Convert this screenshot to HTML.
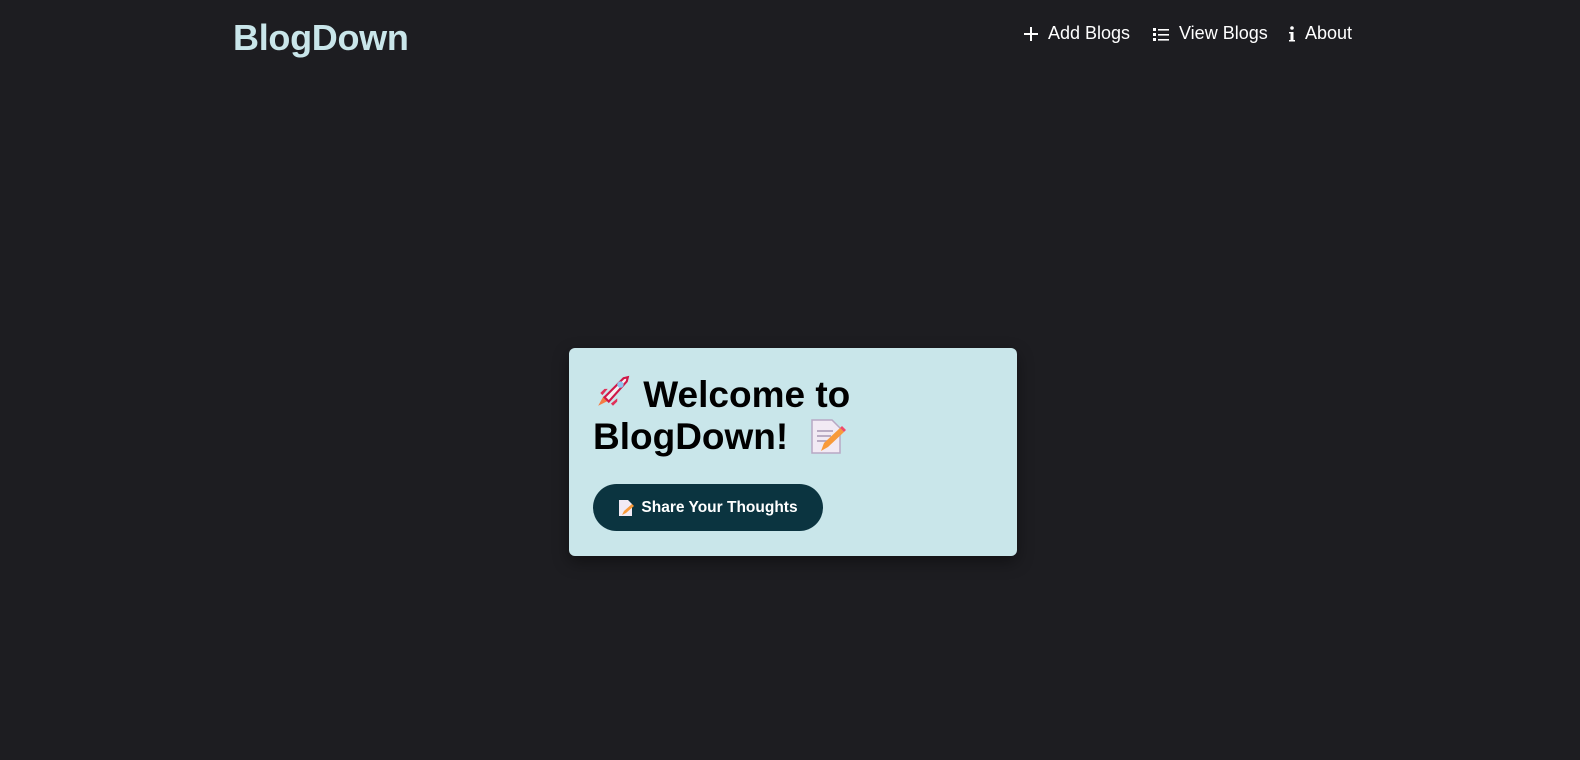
<!DOCTYPE html>
<html><head><meta charset="utf-8"><style>
body{margin:0;width:1580px;height:760px;background:#1d1d21;font-family:"Liberation Sans","DejaVu Sans",sans-serif;position:relative;overflow:hidden}
.logo{position:absolute;left:233px;top:17px;font-size:36px;font-weight:bold;color:#c9e6ea;letter-spacing:-0.3px}
.nav{position:absolute;top:23px;font-size:18px;color:#fff;display:flex;align-items:center;gap:9px}
.card{position:absolute;left:569px;top:348px;width:448px;height:208px;background:#c9e6ea;border-radius:6px;box-shadow:0 6px 16px rgba(0,0,0,.4)}
h1{position:absolute;left:24px;top:26px;margin:0;font-size:37px;line-height:42px;font-weight:bold;color:#000;letter-spacing:0px;white-space:nowrap}
.btn{position:absolute;left:24px;top:136px;width:230px;height:47px;border-radius:24px;background:#0b3440;color:#fff;font-size:15.5px;font-weight:bold;display:flex;align-items:center;justify-content:center;gap:7px}
</style></head><body>
<div class="logo">BlogDown</div>
<div class="nav" style="left:1023px"><svg width="16" height="16" viewBox="0 0 16 16"><path d="M8 1v14M1 8h14" stroke="#fff" stroke-width="2"/></svg>Add Blogs</div>
<div class="nav" style="left:1152px"><svg width="18" height="16" viewBox="0 0 18 16"><g fill="#fff"><rect x="1" y="2" width="3" height="3"/><rect x="1" y="7" width="3" height="3"/><rect x="1" y="12" width="3" height="3"/><rect x="6" y="3" width="11" height="1.6"/><rect x="6" y="8" width="11" height="1.6"/><rect x="6" y="13" width="11" height="1.6"/></g></svg>View Blogs</div>
<div class="nav" style="left:1288px"><svg width="8" height="18" viewBox="0 0 8 18"><g fill="#fff"><circle cx="4" cy="3" r="1.8"/><rect x="2.5" y="7" width="3" height="9"/><rect x="1" y="7" width="4" height="1.5"/><rect x="1" y="15" width="6" height="1.5"/></g></svg>About</div>
<div class="card">
<h1><svg width="40" height="36" viewBox="0 0 36 34" style="vertical-align:-3px"><path d="M4 30l5-9 5 4z" fill="#f47b44"/><path d="M10 22L28 4l4-1-1 4L14 26z" fill="#f4f0f2" stroke="#d01848" stroke-width="2"/><circle cx="25" cy="10" r="3" fill="#8ec6ee"/><path d="M8 20l5-6-3 0-4 4zM16 28l6-5 0 3-4 4z" fill="#e03058"/></svg>&nbsp;Welcome to<br>BlogDown!&nbsp; <svg width="38" height="38" viewBox="0 0 38 38" style="vertical-align:-6px"><path d="M3 3h20l8 8v25H3z" fill="#f2eaf4" stroke="#b8a8c4" stroke-width="1.5"/><path d="M8 14h16M8 19h14M8 24h10" stroke="#a898b4" stroke-width="1.5"/><path d="M12 34l3-8 16-15 4 4-16 15z" fill="#f89a3a"/><path d="M31 11l4 4 2-2-4-4z" fill="#f04a6a"/></svg></h1>
<div class="btn"><svg width="16" height="18" viewBox="0 0 16 18"><path d="M1 1h9l4 4v12H1z" fill="#f2eaf4"/><path d="M4 16l2-4 8-7 2 2-8 7z" fill="#f89a3a"/></svg>Share Your Thoughts</div>
</div>
</body></html>
